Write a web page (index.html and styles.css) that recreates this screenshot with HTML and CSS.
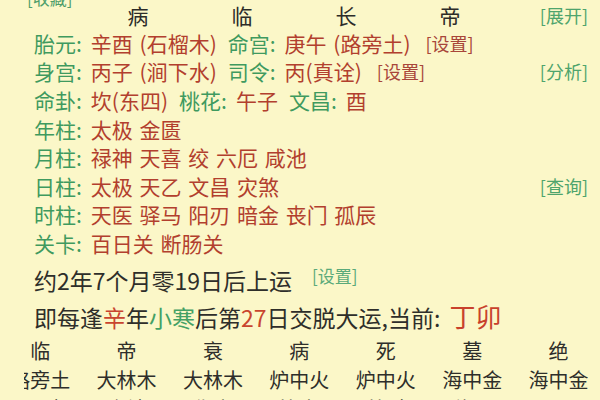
FILE: index.html
```html
<!DOCTYPE html>
<html lang="zh-CN">
<head>
<meta charset="utf-8">
<link rel="stylesheet" href="styles.css">
</head>
<body>
<div class="page">
  <div class="fav">[收藏]</div>
  <div class="head">
    <span class="hc">病</span><span class="hc">临</span><span class="hc">长</span><span class="hc">帝</span>
    <span class="btn">[展开]</span>
  </div>
  <div class="row"><span class="k">胎元:</span><span class="v">辛酉 (石榴木)</span><span class="k">命宫:</span><span class="v">庚午 (路旁土)</span><span class="set">[设置]</span></div>
  <div class="row"><span class="k">身宫:</span><span class="v">丙子 (涧下水)</span><span class="k">司令:</span><span class="v">丙(真诠)</span><span class="set">[设置]</span><span class="btn">[分析]</span></div>
  <div class="row"><span class="k">命卦:</span><span class="v">坎(东四)</span><span class="k">桃花:</span><span class="v">午子</span><span class="k">文昌:</span><span class="v">酉</span></div>
  <div class="row"><span class="k">年柱:</span><span class="v">太极 金匮</span></div>
  <div class="row"><span class="k">月柱:</span><span class="v">禄神 天喜 绞 六厄 咸池</span></div>
  <div class="row"><span class="k">日柱:</span><span class="v">太极 天乙 文昌 灾煞</span><span class="btn">[查询]</span></div>
  <div class="row"><span class="k">时柱:</span><span class="v">天医 驿马 阳刃 暗金 丧门 孤辰</span></div>
  <div class="row"><span class="k">关卡:</span><span class="v">百日关 断肠关</span></div>
  <div class="line first">约2年7个月零19日后上运<span class="set2">[设置]</span></div>
  <div class="line">即每逢<span class="r">辛</span>年<span class="g">小寒</span>后第<span class="r">27</span>日交脱大运,当前: <span class="cur">丁卯</span></div>
  <div class="tbl-wrap">
    <div class="tbl">
      <span>临</span><span>帝</span><span>衰</span><span>病</span><span>死</span><span>墓</span><span>绝</span>
      <span>路旁土</span><span>大林木</span><span>大林木</span><span>炉中火</span><span>炉中火</span><span>海中金</span><span>海中金</span>
      <span>正财</span><span>食神</span><span>伤官</span><span>比肩</span><span>劫财</span><span>偏印</span><span>正印</span>
    </div>
  </div>
</div>
</body>
</html>
```

FILE: styles.css
```css
html, body {
  margin: 0;
  padding: 0;
  background: #fbf7c8;
  overflow: hidden;
}
body {
  width: 600px;
  height: 400px;
  font-family: "Noto Sans CJK SC", "Noto Sans", sans-serif;
  color: #2e2e2a;
}
.page {
  padding: 0 12px 0 34px;
}
.fav {
  height: 16px;
  line-height: 16px;
  margin-top: -10px;
  margin-left: -7px;
  font-size: 17px;
  color: #4e9e6a;
}
.head {
  margin-top: -6px;
  height: 28.6px;
  display: grid;
  grid-template-columns: 52px repeat(4, 104px) 1fr;
  align-items: center;
  font-size: 21px;
  color: #2c2c28;
}
.head .hc {
  text-align: center;
}
.head .hc:first-child {
  grid-column: 2;
}
.head .btn {
  justify-self: end;
}
.row {
  height: 28.6px;
  display: flex;
  align-items: center;
  font-size: 21px;
  white-space: nowrap;
}
.k {
  color: #3f9a5f;
  margin-right: 9px;
}
.v {
  color: #b23f2e;
  margin-right: 11px;
  word-spacing: 2px;
}
.set {
  color: #a8463a;
  font-size: 18px;
  margin-left: 4px;
}
.btn {
  color: #4ea46c;
  font-size: 18px;
  margin-left: auto;
}
.line {
  height: 36px;
  line-height: 36px;
  font-size: 23px;
  color: #2e2e2a;
  white-space: nowrap;
}
.line.first {
  margin-top: 5px;
}
.set2 {
  color: #5aaa7a;
  font-size: 17px;
  margin-left: 20px;
  vertical-align: top;
  position: relative;
  top: -4px;
}
.r {
  color: #c9452f;
}
.g {
  color: #44a165;
}
.cur {
  color: #c8412c;
  font-size: 26px;
  margin-left: 4px;
}
.tbl-wrap {
  margin-left: -10px;
  margin-top: 2px;
  overflow: hidden;
}
.tbl {
  margin-left: -27px;
  display: grid;
  grid-template-columns: repeat(7, 86.4px);
  grid-auto-rows: 29px;
  align-items: center;
  font-size: 20px;
  color: #2e2e2a;
}
.tbl span {
  text-align: center;
  white-space: nowrap;
}
```
